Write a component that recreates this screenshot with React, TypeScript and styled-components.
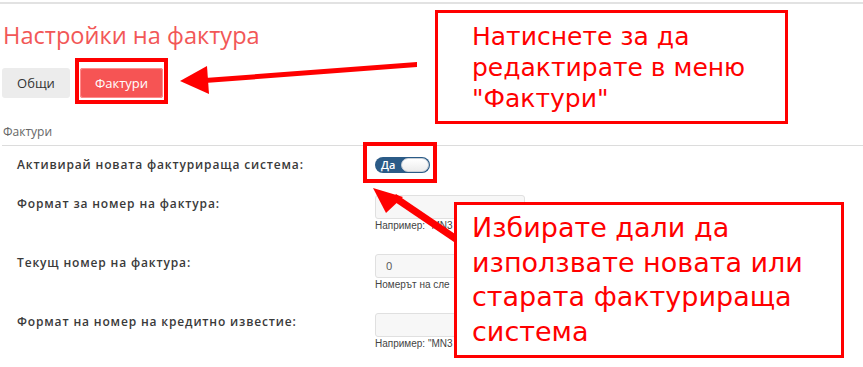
import { createGlobalStyle } from 'styled-components';
import styled from 'styled-components';

const GlobalStyle = createGlobalStyle`
  html, body {
    margin: 0;
    padding: 0;
    background: #fff;
    font-family: 'Open Sans', 'Noto Sans', sans-serif;
  }
`;

const Page = styled.div`
  position: relative;
  width: 863px;
  height: 367px;
  overflow: hidden;
`;

const TopRule = styled.div`
  margin-top: 2px;
  height: 2px;
  background: #e2e2e2;
`;

const Title = styled.h1`
  margin: 15px 0 0 3px;
  font-size: 23.6px;
  line-height: 33px;
  font-weight: 400;
  color: #f25757;
`;

const Tabs = styled.div`
  display: flex;
  gap: 10px;
  margin: 16px 0 0 2px;
`;

const Tab = styled.button<{ $active?: boolean; $w: number }>`
  width: ${(p) => p.$w}px;
  height: 30px;
  padding: 0;
  border: none;
  border-radius: 3px;
  font-family: 'Open Sans', sans-serif;
  font-size: 13px;
  background: ${(p) => (p.$active ? '#f65454' : '#ececec')};
  color: ${(p) => (p.$active ? '#fff' : '#333')};
  box-shadow: ${(p) => (p.$active ? 'inset 0 0 0 1px #ff8a8a' : 'none')};
`;

const SectionLabel = styled.div`
  margin: 25px 0 0 3px;
  font-size: 12px;
  line-height: 18px;
  color: #666;
`;

const Divider = styled.div`
  margin: 4px 0 0 2px;
  height: 1px;
  background: #dcdcdc;
`;

const Form = styled.div`
  display: flex;
  flex-direction: column;
  gap: 22px;
  margin-top: 11px;
`;

const Row = styled.div<{ $center?: boolean }>`
  display: grid;
  grid-template-columns: 375px 1fr;
  align-items: ${(p) => (p.$center ? 'center' : 'start')};
`;

const Label = styled.div<{ $center?: boolean }>`
  padding-left: 17px;
  padding-top: ${(p) => (p.$center ? '0' : '1px')};
  font-size: 12px;
  line-height: 16px;
  font-weight: 600;
  letter-spacing: 0.85px;
  color: #3a3a3a;
`;

const Field = styled.div`
  display: flex;
  flex-direction: column;
  align-items: flex-start;
`;

const Input = styled.div`
  box-sizing: border-box;
  width: 150px;
  height: 24px;
  padding-left: 10px;
  border: 1px solid #e0e0e0;
  border-radius: 3px;
  background: #f7f7f7;
  font-size: 11px;
  line-height: 22px;
  color: #555;
`;

const Help = styled.div`
  margin-top: 1px;
  font-family: 'Liberation Sans', Arial, sans-serif;
  font-size: 10px;
  line-height: 12px;
  color: #444;
  white-space: nowrap;
`;

const Toggle = styled.div`
  box-sizing: border-box;
  display: flex;
  align-items: center;
  justify-content: space-between;
  width: 55px;
  height: 16px;
  padding: 1px 1px 1px 6px;
  border-radius: 8px;
  background: #2b5b87;
`;

const ToggleText = styled.span`
  font-size: 11px;
  line-height: 14px;
  font-weight: 600;
  color: #fff;
`;

const Knob = styled.span`
  box-sizing: border-box;
  width: 28px;
  height: 14px;
  border-radius: 7px;
  background: linear-gradient(#fff, #ececec);
  border: 1px solid #c8d0d8;
`;

const Frame = styled.div<{ $x: number; $y: number; $w: number; $h: number }>`
  position: absolute;
  box-sizing: border-box;
  left: ${(p) => p.$x}px;
  top: ${(p) => p.$y}px;
  width: ${(p) => p.$w}px;
  height: ${(p) => p.$h}px;
  border: 4px solid #ff0000;
`;

const Note = styled.div<{ $x: number; $y: number; $w: number; $h: number; $size: number; $lh: number; $pad: string }>`
  position: absolute;
  box-sizing: border-box;
  left: ${(p) => p.$x}px;
  top: ${(p) => p.$y}px;
  width: ${(p) => p.$w}px;
  height: ${(p) => p.$h}px;
  padding: ${(p) => p.$pad};
  border: 3px solid #ff0000;
  background: #fff;
  font-family: 'DejaVu Sans', sans-serif;
  font-size: ${(p) => p.$size}px;
  line-height: ${(p) => p.$lh}px;
  color: #ff0000;
`;

const Arrows = styled.svg`
  position: absolute;
  left: 0;
  top: 0;
`;

export default function App() {
  return (
    <>
      <GlobalStyle />
      <Page>
        <TopRule />
        <Title>Настройки на фактура</Title>
        <Tabs>
          <Tab $w={68}>Общи</Tab>
          <Tab $w={83} $active>
            Фактури
          </Tab>
        </Tabs>
        <SectionLabel>Фактури</SectionLabel>
        <Divider />
        <Form>
          <Row $center>
            <Label $center>Активирай новата фактурираща система:</Label>
            <Field>
              <Toggle>
                <ToggleText>Да</ToggleText>
                <Knob />
              </Toggle>
            </Field>
          </Row>
          <Row>
            <Label>Формат за номер на фактура:</Label>
            <Field>
              <Input />
              <Help>Например: "MN3</Help>
            </Field>
          </Row>
          <Row>
            <Label>Текущ номер на фактура:</Label>
            <Field>
              <Input>0</Input>
              <Help>Номерът на сле</Help>
            </Field>
          </Row>
          <Row>
            <Label>Формат на номер на кредитно известие:</Label>
            <Field>
              <Input />
              <Help>Например: "MN3</Help>
            </Field>
          </Row>
        </Form>

        <Arrows width="863" height="367">
          <polygon points="417,62 417,67 205,83 205,78" fill="#ff0000" />
          <polygon points="180,81 207,66 209,94" fill="#ff0000" />
          <polygon points="392,200 396,194 458,236 454,242" fill="#ff0000" />
          <polygon points="373,188 403,197 386,213" fill="#ff0000" />
        </Arrows>

        <Frame $x={75} $y={58} $w={93} $h={46} />
        <Frame $x={363} $y={142} $w={74} $h={41} />

        <Note $x={435} $y={10} $w={353} $h={114} $size={25} $lh={31} $pad="8px 0 0 34px">
          Натиснете за да
          <br />
          редактирате в меню
          <br />
          "Фактури"
        </Note>
        <Note $x={454} $y={202} $w={390} $h={156} $size={27} $lh={34.7} $pad="6px 0 0 15px">
          Избирате дали да
          <br />
          използвате новата или
          <br />
          старата фактурираща
          <br />
          система
        </Note>
      </Page>
    </>
  );
}
